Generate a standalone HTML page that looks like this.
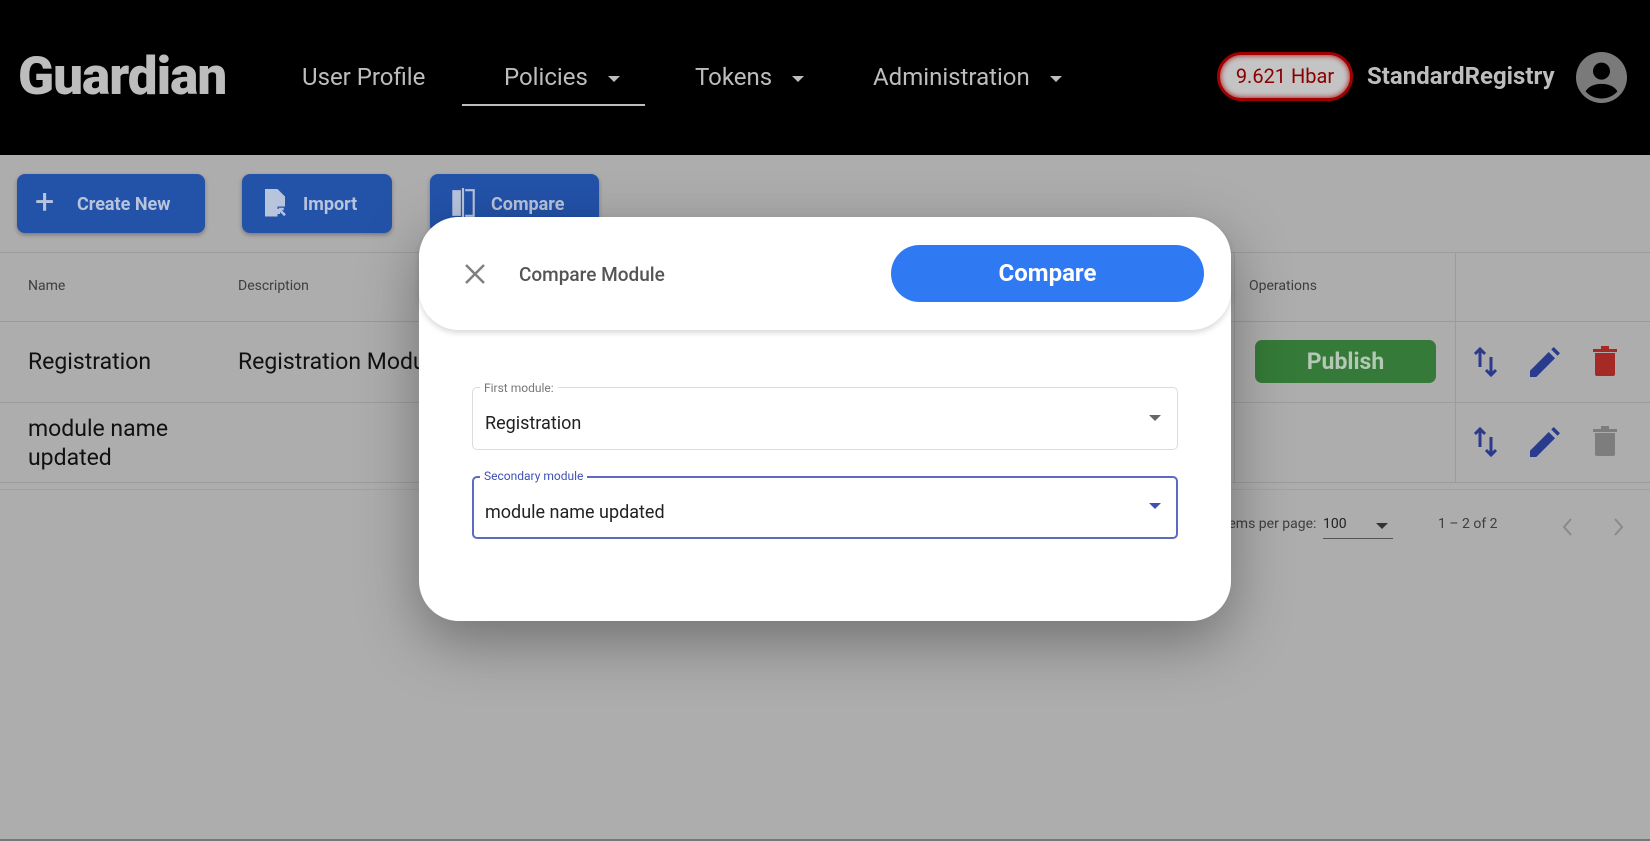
<!DOCTYPE html>
<html><head><meta charset="utf-8"><style>
*{box-sizing:border-box;margin:0;padding:0}
body{width:1650px;height:841px;overflow:hidden;background:#adadad;font-family:Roboto,"Liberation Sans",sans-serif;position:relative}
.a{position:absolute;white-space:nowrap}
.hdr{position:absolute;left:0;top:0;width:1650px;height:155px;background:#000}
.nav{color:#bdbdbd;font-size:24px}
.btn{position:absolute;background:#2352a9;border-radius:8px;color:#b8c4dc;font-size:18px;font-weight:bold;box-shadow:0 2px 4px rgba(0,0,0,.3)}
.line{position:absolute;background:#999;height:1px}
.caret{display:inline-block;width:0;height:0;border-left:6px solid transparent;border-right:6px solid transparent;border-top:6px solid #bdbdbd;vertical-align:middle;margin-left:20px}
</style></head><body>
<div class="hdr"></div>
<div class="a" style="left:18px;top:45px;font-size:53px;font-weight:900;color:#bdbdbd;letter-spacing:-1px">Guardian</div>
<div class="a nav" style="left:302px;top:63px">User Profile</div>
<div class="a nav" style="left:504px;top:63px">Policies<span class="caret"></span></div>
<div class="a" style="left:462px;top:104px;width:183px;height:2px;background:#bdbdbd"></div>
<div class="a nav" style="left:695px;top:63px">Tokens<span class="caret"></span></div>
<div class="a nav" style="left:873px;top:63px">Administration<span class="caret"></span></div>
<div class="a" style="left:1217px;top:52px;width:136px;height:49px;border:3px solid #a00000;border-radius:25px;background:#c4c4c4;color:#8a0000;font-size:20px;text-align:center;line-height:43px;box-shadow:inset 0 0 6px #a00">9.621 Hbar</div>
<div class="a" style="left:1367px;top:62px;color:#bdbdbd;font-size:24px;font-weight:bold">StandardRegistry</div>
<svg class="a" style="left:1576px;top:52px" width="51" height="51" viewBox="0 0 24 24"><circle cx="12" cy="12" r="12" fill="#7a7a7a"/><circle cx="12" cy="9" r="4" fill="#000"/><path d="M4.5 18.5c1.5-2.5 4.5-3.5 7.5-3.5s6 1 7.5 3.5A10 10 0 0 1 4.5 18.5z" fill="#000"/></svg>

<div class="btn" style="left:17px;top:174px;width:188px;height:59px"><span class="a" style="left:18px;top:8px;font-size:34px;font-weight:normal">+</span><span class="a" style="left:60px;top:20px">Create New</span></div>
<div class="btn" style="left:242px;top:174px;width:150px;height:59px"><svg class="a" style="left:20px;top:15px" width="26" height="30" viewBox="0 0 20 24"><path d="M2 0h10l6 6v8h-6v8H2z" fill="#b8c4dc"/><path d="M13 16l5 5M13 16v4M13 16h4" stroke="#b8c4dc" stroke-width="2" fill="none"/></svg><span class="a" style="left:61px;top:20px">Import</span></div>
<div class="btn" style="left:430px;top:174px;width:169px;height:59px"><svg class="a" style="left:20px;top:14px" width="26" height="30" viewBox="0 0 24 28"><path d="M2 2h8v24H2z" fill="#b8c4dc"/><path d="M14 2h8v24h-8" stroke="#b8c4dc" stroke-width="2" fill="none"/><path d="M12 0v28" stroke="#b8c4dc" stroke-width="2"/></svg><span class="a" style="left:61px;top:20px">Compare</span></div>

<div class="line" style="left:0;top:252px;width:1650px;background:#9c9c9c"></div>
<div class="a" style="left:28px;top:278px;font-size:14px;color:#3e3e3e">Name</div>
<div class="a" style="left:238px;top:278px;font-size:14px;color:#3e3e3e">Description</div>
<div class="a" style="left:1249px;top:278px;font-size:14px;color:#3e3e3e">Operations</div>
<div class="line" style="left:0;top:321px;width:1650px;background:#9a9a9a"></div>
<div class="a" style="left:1234px;top:252px;width:1px;height:230px;background:#9c9c9c"></div>
<div class="a" style="left:1455px;top:252px;width:1px;height:230px;background:#9c9c9c"></div>
<div class="a" style="left:28px;top:348px;font-size:23px;color:#111">Registration</div>
<div class="a" style="left:238px;top:348px;font-size:23px;color:#111">Registration Module</div>
<div class="a" style="left:1255px;top:340px;width:181px;height:43px;background:#357a38;border-radius:7px;color:#b5c7b5;font-size:23px;font-weight:bold;text-align:center;line-height:43px">Publish</div>
<div class="line" style="left:0;top:402px;width:1650px;background:#9c9c9c"></div>
<div class="a" style="left:28px;top:414px;font-size:23px;color:#111;line-height:29px">module name<br>updated</div>
<div class="line" style="left:0;top:482px;width:1650px;background:#9c9c9c"></div>
<div class="line" style="left:0;top:489px;width:1650px;background:#a2a2a2"></div>
<svg class="a" style="left:1473px;top:346px" width="26" height="32" viewBox="0 0 26 32"><path d="M7 3v18M2 8l5-5 5 5M18 11v18M13 24l5 5 5-5" stroke="#2a3a8c" stroke-width="3" fill="none"/></svg>
<svg class="a" style="left:1473px;top:426px" width="26" height="32" viewBox="0 0 26 32"><path d="M7 3v18M2 8l5-5 5 5M18 11v18M13 24l5 5 5-5" stroke="#2a3a8c" stroke-width="3" fill="none"/></svg>
<svg class="a" style="left:1530px;top:347px" width="30" height="30" viewBox="0 0 24 24"><path d="M0 24v-5L15 4l5 5L5 24zM17 2l2-2 5 5-2 2z" fill="#2a3a8c"/></svg>
<svg class="a" style="left:1530px;top:427px" width="30" height="30" viewBox="0 0 24 24"><path d="M0 24v-5L15 4l5 5L5 24zM17 2l2-2 5 5-2 2z" fill="#2a3a8c"/></svg>
<svg class="a" style="left:1593px;top:346px" width="24" height="30" viewBox="0 0 24 30"><path d="M0 3h24v3H0zM8 0h8v3H8zM2 7h20v21a2 2 0 0 1-2 2H4a2 2 0 0 1-2-2z" fill="#a52a25"/></svg>
<svg class="a" style="left:1593px;top:426px" width="24" height="30" viewBox="0 0 24 30"><path d="M0 3h24v3H0zM8 0h8v3H8zM2 7h20v21a2 2 0 0 1-2 2H4a2 2 0 0 1-2-2z" fill="#7d7d7d"/></svg>
<div class="a" style="left:1220px;top:516px;font-size:14px;color:#3e3e3e">Items per page:</div>
<div class="a" style="left:1323px;top:516px;font-size:14px;color:#222">100</div>
<div class="a" style="left:1376px;top:523px;border-left:6px solid transparent;border-right:6px solid transparent;border-top:6px solid #333"></div>
<div class="a" style="left:1323px;top:538px;width:70px;height:1px;background:#555"></div>
<div class="a" style="left:1438px;top:516px;font-size:14px;color:#3e3e3e">1 – 2 of 2</div>
<svg class="a" style="left:1561px;top:516px" width="14" height="22" viewBox="0 0 14 22"><path d="M10 3L3 11l7 8" stroke="#8a8a8a" stroke-width="2" fill="none"/></svg>
<svg class="a" style="left:1611px;top:516px" width="14" height="22" viewBox="0 0 14 22"><path d="M4 3l7 8-7 8" stroke="#8a8a8a" stroke-width="2" fill="none"/></svg>
<div class="line" style="left:0;top:839px;width:1650px;background:#777;height:2px"></div>

<div class="a" style="left:419px;top:217px;width:812px;height:404px;background:#fff;border-radius:40px;box-shadow:0 20px 60px rgba(0,0,0,.35)"></div>
<div class="a" style="left:419px;top:217px;width:812px;height:113px;background:#fff;border-radius:40px;box-shadow:0 3px 6px rgba(0,0,0,.15)"></div>
<svg class="a" style="left:464px;top:263px" width="22" height="22" viewBox="0 0 22 22"><path d="M2 2l18 18M20 2L2 20" stroke="#808080" stroke-width="2.5"/></svg>
<div class="a" style="left:519px;top:263px;font-size:19px;color:#555;font-weight:500">Compare Module</div>
<div class="a" style="left:891px;top:245px;width:313px;height:57px;background:#2f79f3;border-radius:29px;color:#fff;font-size:24px;font-weight:bold;text-align:center;line-height:57px">Compare</div>

<div class="a" style="left:472px;top:387px;width:706px;height:63px;border:1px solid #dcdcdc;border-radius:5px"></div>
<div class="a" style="left:480px;top:381px;background:#fff;padding:0 4px;font-size:12px;color:#777">First module:</div>
<div class="a" style="left:485px;top:413px;font-size:18px;color:#222">Registration</div>
<div class="a" style="left:1149px;top:415px;border-left:6px solid transparent;border-right:6px solid transparent;border-top:6px solid #666"></div>
<div class="a" style="left:472px;top:476px;width:706px;height:63px;border:2px solid #5c6bc0;border-radius:5px"></div>
<div class="a" style="left:480px;top:469px;background:#fff;padding:0 4px;font-size:12px;color:#3f51b5">Secondary module</div>
<div class="a" style="left:485px;top:502px;font-size:18px;color:#222">module name updated</div>
<div class="a" style="left:1149px;top:503px;border-left:6px solid transparent;border-right:6px solid transparent;border-top:6px solid #3f51b5"></div>
</body></html>
